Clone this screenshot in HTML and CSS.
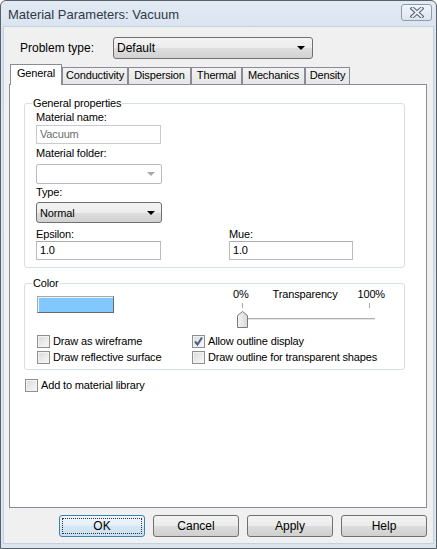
FILE: index.html
```html
<!DOCTYPE html>
<html>
<head>
<meta charset="utf-8">
<link rel="stylesheet" href="styles.css">
</head>
<body>
<div class="window">
  <div class="titlebar">
    <span class="title">Material Parameters: Vacuum</span>
    <span class="close">
      <svg width="14" height="11" viewBox="0 0 14 11">
        <path d="M2.5 1.5 L11.5 9.5 M11.5 1.5 L2.5 9.5" stroke="#55606c" stroke-width="4" stroke-linecap="square" fill="none"/>
        <path d="M2.5 1.5 L11.5 9.5 M11.5 1.5 L2.5 9.5" stroke="#e9eef4" stroke-width="2" stroke-linecap="square" fill="none"/>
      </svg>
    </span>
  </div>
  <div class="client">
    <div class="problem-row">
      <span class="problem-label">Problem type:</span>
      <div class="combo btncombo big"><span>Default</span><span class="arrow"></span></div>
    </div>

    <div class="tabs">
      <div class="tab active">General</div>
      <div class="tab w66">Conductivity</div>
      <div class="tab w63">Dispersion</div>
      <div class="tab w51">Thermal</div>
      <div class="tab w63">Mechanics</div>
      <div class="tab w45">Density</div>
    </div>

    <div class="panel">
      <fieldset class="group general">
        <legend>General properties</legend>
        <div class="fields">
          <div class="lbl mt1">Material name:</div>
          <div class="textbox disabled mt1">Vacuum</div>
          <div class="lbl mt3">Material folder:</div>
          <div class="combo dis-combo mt4"><span></span><span class="arrow grey"></span></div>
          <div class="lbl mt2">Type:</div>
          <div class="combo btncombo small mt3"><span>Normal</span><span class="arrow"></span></div>
          <div class="pair">
            <div class="col">
              <div class="lbl">Epsilon:</div>
              <div class="textbox">1.0</div>
            </div>
            <div class="col">
              <div class="lbl">Mue:</div>
              <div class="textbox w124">1.0</div>
            </div>
          </div>
        </div>
      </fieldset>

      <fieldset class="group color">
        <legend>Color</legend>
        <div class="color-top">
          <div class="swatch"></div>
          <div class="slider">
            <div class="slider-labels">
              <span class="p0">0%</span><span class="ptr">Transparency</span><span>100%</span>
            </div>
            <div class="ticks"><span class="tick"></span><span class="tick t2"></span></div>
            <div class="slider-row">
              <svg class="thumb" width="11" height="17" viewBox="0 0 11 17">
                <defs>
                  <linearGradient id="tg" x1="0" y1="0" x2="1" y2="0">
                    <stop offset="0" stop-color="#f4f4f4"/>
                    <stop offset="1" stop-color="#d8d8d8"/>
                  </linearGradient>
                </defs>
                <path d="M0.5 16.5 V4.5 L5.5 0.5 L10.5 4.5 V16.5 Z" fill="url(#tg)" stroke="#7a7a7a"/>
              </svg>
              <div class="track"></div>
            </div>
          </div>
        </div>
        <div class="checks">
          <label class="check"><span class="box"></span><span>Draw as wireframe</span></label>
          <label class="check"><span class="box checked"><svg width="11" height="11" viewBox="0 0 11 11"><path d="M2 5.5 L4.5 8.5 L9 1.5" stroke="#4b5f8c" stroke-width="2" fill="none"/></svg></span><span>Allow outline display</span></label>
          <label class="check"><span class="box"></span><span>Draw reflective surface</span></label>
          <label class="check"><span class="box"></span><span>Draw outline for transparent shapes</span></label>
        </div>
      </fieldset>

      <label class="check lib"><span class="box"></span><span>Add to material library</span></label>
    </div>

    <div class="buttons">
      <div class="btn default">OK</div>
      <div class="btn">Cancel</div>
      <div class="btn">Apply</div>
      <div class="btn">Help</div>
    </div>
  </div>
</div>
</body>
</html>
```

FILE: styles.css
```css
* { box-sizing: border-box; }
html, body { margin: 0; padding: 0; }
body {
  width: 437px;
  height: 549px;
  overflow: hidden;
  font-family: "Liberation Sans", Arial, sans-serif;
  font-size: 11px;
  letter-spacing: -0.15px;
  color: #000;
  background: #fff;
}
.window {
  width: 437px;
  height: 549px;
  border: 1px solid #5b6169;
  border-radius: 6px 6px 0 0;
  background: linear-gradient(#e2eaf4, #d9e3ef 30px, #dbe5f0);
  display: flex;
  flex-direction: column;
}
.titlebar {
  height: 25px;
  flex: none;
  display: flex;
  align-items: center;
  justify-content: space-between;
  padding: 0 4px 0 7px;
}
.title {
  font-size: 13px;
  letter-spacing: 0;
  color: #2f3a46;
  padding-top: 1px;
}
.close {
  width: 31px;
  height: 17px;
  margin-top: -2px;
  border: 1px solid #8d9bab;
  border-radius: 3px;
  background: linear-gradient(#f1f5fa, #dce5f0);
  display: flex;
  align-items: center;
  justify-content: center;
}
.client {
  flex: 1;
  margin: 0 2px 4px 2px;
  background: #f0f0f0;
  border: 1px solid #c3d2e3;
  display: flex;
  flex-direction: column;
}
.problem-row {
  margin-top: 10px;
  padding-left: 16px;
  height: 22px;
  display: flex;
  align-items: center;
  letter-spacing: 0;
}
.problem-label {
  width: 93px;
  font-size: 12px;
}
.combo {
  display: flex;
  align-items: center;
  justify-content: space-between;
}
.btncombo {
  border: 1px solid #707070;
  border-radius: 3px;
  background: linear-gradient(#f4f4f4, #ececec 50%, #dedede 50%, #d2d2d2);
}
.big {
  width: 200px;
  height: 22px;
  font-size: 12px;
  padding: 0 7px 0 3px;
}
.small {
  width: 126px;
  height: 21px;
  padding: 0 6px 0 3px;
}
.arrow {
  width: 0;
  height: 0;
  border-left: 4px solid transparent;
  border-right: 4px solid transparent;
  border-top: 4px solid #000;
}
.arrow.grey { border-top-color: #a8a8a8; }
.dis-combo {
  width: 126px;
  height: 20px;
  border: 1px solid #b8bcc2;
  border-radius: 2px;
  background: #fff;
  padding: 0 6px 0 3px;
}
.tabs {
  margin: 5px 0 0 6px;
  height: 21px;
  display: flex;
  align-items: flex-end;
  position: relative;
  z-index: 2;
}
.tab {
  height: 18px;
  border: 1px solid #898c95;
  background: linear-gradient(#f2f2f2, #e6e6e6);
  line-height: 15px;
  text-align: center;
  white-space: nowrap;
}
.w66 { width: 66px; }
.w63 { width: 63px; }
.w51 { width: 51px; }
.w45 { width: 45px; }
.tab.active {
  height: 21px;
  width: 52px;
  border-bottom: none;
  background: #fff;
  line-height: 17px;
}
.panel {
  margin: -1px 0 0 5px;
  width: 418px;
  height: 424px;
  border: 1px solid #898c95;
  background: #fff;
  display: flex;
  flex-direction: column;
  align-items: flex-start;
}
.group {
  margin: 0;
  padding: 0;
  min-width: 0;
  width: 381px;
  border: 1px solid #d5dfe5;
  border-radius: 3px;
}
.group legend {
  margin-left: 7px;
  padding: 0 1px;
  line-height: 13px;
  font-size: 11px;
}
.general {
  margin: 12px 0 0 14px;
  padding-bottom: 7px;
}
.fields {
  padding-left: 11px;
  display: flex;
  flex-direction: column;
  align-items: flex-start;
}
.lbl { line-height: 13px; }
.mt1 { margin-top: 1px; }
.mt2 { margin-top: 2px; }
.mt3 { margin-top: 3px; }
.mt4 { margin-top: 4px; }
.textbox {
  width: 125px;
  height: 19px;
  border: 1px solid #b7bcc3;
  border-top-color: #abadb3;
  background: #fff;
  padding-left: 3px;
  line-height: 17px;
}
.textbox.disabled {
  color: #6d6d6d;
  border-color: #c7cacf;
}
.textbox.w124 { width: 124px; }
.pair {
  margin-top: 5px;
  display: grid;
  grid-template-columns: 193px auto;
}
.color {
  margin: 9px 0 0 14px;
  padding-bottom: 2px;
}
.color-top {
  display: flex;
  align-items: flex-start;
}
.swatch {
  margin: 6px 0 0 12px;
  width: 77px;
  height: 17px;
  background: #80c8ff;
  border: 1px solid;
  border-color: #a9a9a9 #696969 #696969 #a9a9a9;
  box-shadow: inset 1px 1px 0 #e8f4ff;
}
.slider {
  margin: -2px 0 0 119px;
  width: 152px;
}
.slider-labels {
  display: flex;
  line-height: 13px;
  white-space: nowrap;
}
.p0 { width: 40px; }
.ptr { width: 86px; }
.ticks {
  margin-top: 2px;
  height: 6px;
  display: flex;
  padding-left: 9px;
}
.tick {
  width: 1px;
  height: 5px;
  background: #a8a8a8;
}
.tick.t2 { margin-left: 126px; }
.slider-row {
  height: 19px;
  display: flex;
  align-items: flex-end;
  padding-left: 4px;
}
.thumb { display: block; flex: none; }
.track {
  width: 127px;
  height: 2px;
  margin-bottom: 8px;
  border-top: 1px solid #b0b0b0;
  border-bottom: 1px solid #e6e6e6;
}
.checks {
  margin: 7px 0 0 12px;
  display: grid;
  grid-template-columns: 155px auto;
  grid-auto-rows: 16px;
}
.check {
  display: flex;
  align-items: flex-start;
  gap: 3px;
  line-height: 13px;
  white-space: nowrap;
}
.box {
  width: 13px;
  height: 13px;
  flex: none;
  border: 1px solid #8e8f8f;
  background: linear-gradient(135deg, #d9d9d9, #f9f9f9);
  box-shadow: inset 0 0 0 1px #f3f3f3;
  display: flex;
  align-items: center;
  justify-content: center;
}
.box.checked {
  background: linear-gradient(135deg, #dcdcdc, #fafafa);
}
.lib {
  margin: 9px 0 0 15px;
}
.buttons {
  margin-top: 7px;
  display: flex;
  justify-content: flex-end;
  gap: 8px;
  padding-right: 6px;
}
.btn {
  width: 86px;
  height: 22px;
  border: 1px solid #707070;
  border-radius: 3px;
  background: linear-gradient(#f3f3f3, #ebebeb 50%, #dddddd 50%, #cfcfcf);
  font-size: 12px;
  letter-spacing: 0;
  display: flex;
  align-items: center;
  justify-content: center;
}
.btn.default {
  border-color: #3c7fb1;
  background: linear-gradient(#eef6fb, #e3eff8 50%, #d5e7f4 50%, #cbe1f1);
  outline: 1px dotted #333;
  outline-offset: -4px;
}
```
